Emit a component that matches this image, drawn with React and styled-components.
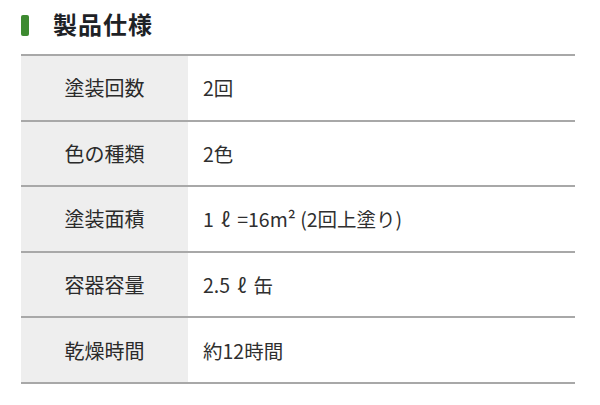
import styled, { createGlobalStyle } from "styled-components";

const GlobalStyle = createGlobalStyle`
  body {
    margin: 0;
    background: #fff;
    font-family: "Noto Sans CJK JP", "Noto Sans", sans-serif;
  }
`;

const App = () => {
  return (
    <Page>
      <GlobalStyle />
      <Heading>
        <Mark />
        <Title>製品仕様</Title>
      </Heading>
      <SpecTable>
        <tbody>
          <Row>
            <Label>塗装回数</Label>
            <Value>2回</Value>
          </Row>
          <Row>
            <Label>色の種類</Label>
            <Value>2色</Value>
          </Row>
          <Row>
            <Label>塗装面積</Label>
            <Value>1<Liter>ℓ</Liter>=16m² (2回上塗り)</Value>
          </Row>
          <Row>
            <Label>容器容量</Label>
            <Value>2.5<Liter>ℓ</Liter>缶</Value>
          </Row>
          <Row>
            <Label>乾燥時間</Label>
            <Value>約12時間</Value>
          </Row>
        </tbody>
      </SpecTable>
    </Page>
  );
};
export default App;

const Page = styled.div`
  width: 600px;
  height: 405px;
  padding-left: 21px;
  box-sizing: border-box;
  overflow: hidden;
`;

const Heading = styled.div`
  display: flex;
  align-items: center;
  gap: 24px;
  height: 51px;
`;

const Mark = styled.span`
  display: block;
  width: 8px;
  height: 21px;
  background: #3d8a30;
  border-radius: 2px;
`;

const Title = styled.h2`
  margin: 0 0 3px;
  font-size: 24px;
  font-weight: 700;
  color: #1e2226;
  letter-spacing: 1px;
  line-height: 1;
`;

const SpecTable = styled.table`
  width: 554px;
  margin-top: 3px;
  border-collapse: collapse;
  border-top: 2px solid #a8a8a8;
`;

const Row = styled.tr`
  border-bottom: 2px solid #a8a8a8;
`;

const Label = styled.td`
  width: 167px;
  height: 63.6px;
  padding: 0;
  background: #eeeeee;
  text-align: center;
  font-size: 20px;
  color: #2a2a2a;
`;

const Value = styled.td`
  padding: 0 0 0 15px;
  font-size: 19.5px;
  color: #2f2f2f;
`;

const Liter = styled.span`
  display: inline-block;
  width: 1.2em;
  text-align: center;
`;
